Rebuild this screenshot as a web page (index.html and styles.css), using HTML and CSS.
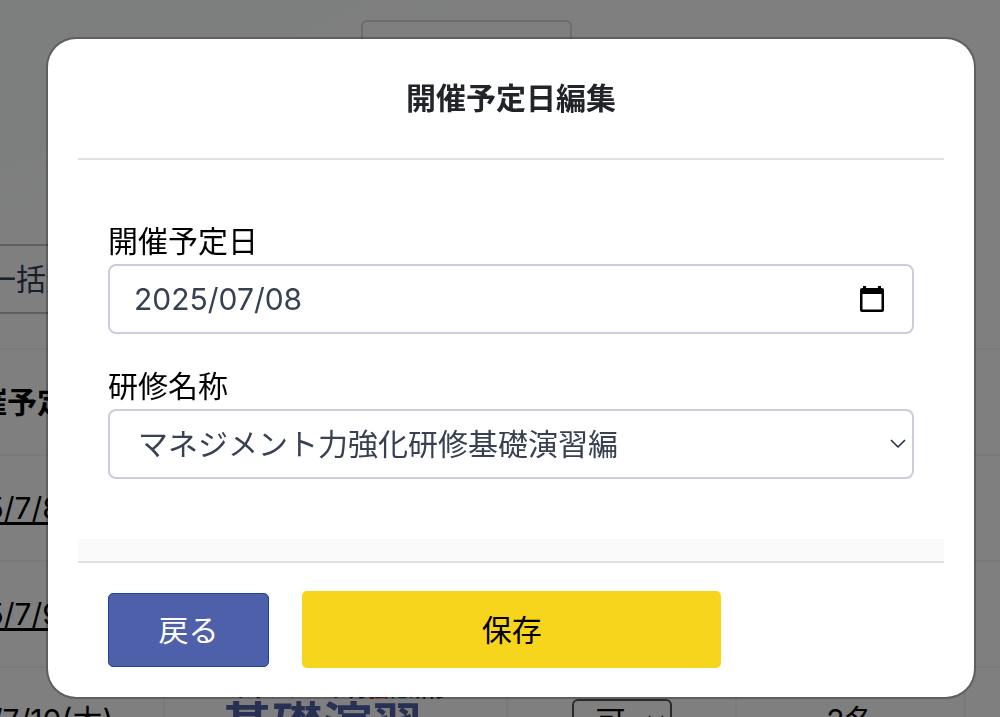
FILE: index.html
```html
<!DOCTYPE html>
<html lang="ja">
<head>
<meta charset="utf-8">
<meta name="viewport" content="width=device-width, initial-scale=1">
<title>開催予定日編集</title>
<link rel="stylesheet" href="styles.css">
</head>
<body>
<main class="page" inert>
  <input class="page-filter" type="text" aria-label="絞り込み">
  <button class="page-bulk" type="button">一括変更</button>
  <table class="schedule">
    <colgroup><col class="col-date"><col class="col-course"><col class="col-status"><col class="col-count"><col></colgroup>
    <thead>
      <tr><th>開催予定日</th><th></th><th></th><th></th><th></th></tr>
    </thead>
    <tbody>
      <tr><td><a href="#d8">2025/7/8</a></td><td></td><td></td><td></td><td></td></tr>
      <tr><td><a href="#d9">2025/7/9</a></td><td></td><td></td><td></td><td></td></tr>
      <tr>
        <td class="date-long">2025/7/10(木)</td>
        <td class="course"><div class="course-top">マネジメント力<span class="red">強</span><span class="green">化</span>研修</div><div class="course-name">基礎演習</div></td>
        <td class="center">
          <span class="status">
            <select class="status-select" aria-label="可否"><option>可</option></select>
            <svg class="status-arrow" viewBox="0 0 16 10" aria-hidden="true"><path d="M1 1l7 7 7-7"/></svg>
          </span>
        </td>
        <td class="center">2名</td>
        <td></td>
      </tr>
    </tbody>
  </table>
</main>

<div class="overlay">
  <form class="modal" role="dialog" aria-modal="true" aria-labelledby="modal-title">
    <header class="modal-header"><h1 class="modal-title" id="modal-title">開催予定日編集</h1></header>
    <div class="modal-body">
      <div class="field">
        <label class="label" for="date">開催予定日</label>
        <div class="control">
          <input class="input" id="date" type="text" value="2025/07/08">
          <button class="picker" type="button" aria-label="カレンダーを開く">
            <svg class="picker-icon" viewBox="0 0 24 26" aria-hidden="true"><path fill-rule="evenodd" d="M3 0h3v2h12V0h3v2h1q2 0 2 2v20q0 2-2 2H2q-2 0-2-2V4q0-2 2-2h1zM2.500 8v15.500h19V8z"/></svg>
          </button>
        </div>
      </div>
      <div class="field">
        <label class="label" for="course">研修名称</label>
        <div class="control">
          <select class="input select" id="course"><option>マネジメント力強化研修基礎演習編</option></select>
          <svg class="select-arrow" viewBox="0 0 16 10" aria-hidden="true"><path d="M1 1l7 7 7-7"/></svg>
        </div>
      </div>
    </div>
    <div class="strip"></div>
    <footer class="modal-footer">
      <button class="button back" type="button">戻る</button>
      <button class="button save" type="submit">保存</button>
    </footer>
  </form>
</div>
</body>
</html>
```
FILE: styles.css
```css
* { box-sizing: border-box; }

body {
  margin: 0;
  height: 100vh;
  overflow: hidden;
  font-family: Inter, "Noto Sans CJK JP", sans-serif;
  font-size: 30px;
  line-height: 44px;
  color: #000;
}

input, select, button {
  margin: 0;
  font: inherit;
  color: inherit;
}

/* Page behind the dialog */
.page {
  display: flex;
  flex-direction: column;
  align-items: flex-start;
  height: 100vh;
  overflow: hidden;
  padding-top: 20px;
  background:
    linear-gradient(155deg, #fbfffd 0, #fbfffd 14%, transparent 20%),
    #fefefe;
}

.page > * { flex-shrink: 0; }

.page-filter {
  width: 211px;
  height: 70px;
  margin-left: 361px;
  border: 2px solid #d5dae3;
  border-radius: 6px;
  background: #fff;
}

.page-bulk {
  height: 70px;
  margin: 154px 0 34px -40px;
  padding: 0 24px;
  border: 2px solid #b8c0cc;
  background: transparent;
  color: #334155;
}

.schedule {
  width: calc(100% + 217px);
  margin-left: -118px;
  table-layout: fixed;
  border-collapse: collapse;
  background: #fff;
}

.schedule th, .schedule td {
  height: 106px;
  padding: 0 0 0 46px;
  border: 2px solid #f3f4f6;
  text-align: left;
  white-space: nowrap;
}

.schedule th { padding-left: 64px; border-left: 0; border-right: 0; background: #fefefe; }
.schedule a { color: inherit; text-underline-offset: 3px; }
.schedule .date-long { padding-left: 34px; }
.schedule .center { padding: 0; text-align: center; }
.schedule .course { padding: 12px 0 0 57px; vertical-align: top; font-weight: 700; }
.col-date { width: 281px; }
.col-course { width: 343px; }
.col-status { width: 229px; }
.col-count { width: 229px; }
.course-top { padding-left: 6px; font-size: 20px; line-height: 20px; color: #20284d; }
.course-name { font-size: 50px; line-height: 52px; color: #5060a8; }
.red { color: #e5342a; }
.green { color: #168a3b; }

.status { display: inline-grid; align-items: center; vertical-align: middle; }
.status > * { grid-area: 1 / 1; }
.status-select {
  appearance: none;
  width: 100px;
  height: 44px;
  padding: 0 22px;
  border: 2px solid #555;
  border-radius: 6px;
  background: transparent;
  line-height: 40px;
}
.status-arrow, .select-arrow {
  justify-self: end;
  width: 16px;
  height: 10px;
  fill: none;
  stroke: #1e293b;
  stroke-width: 1.5;
  pointer-events: none;
}
.status-arrow { margin-right: 8px; margin-bottom: 2px; }

/* Dialog */
.overlay {
  position: fixed;
  inset: 0;
  padding: 37px 24px 0 46px;
  background: rgba(0, 0, 0, 0.5);
}

.modal {
  padding: 0 30px;
  border: 2px solid rgba(0, 0, 0, 0.25);
  border-radius: 30px;
  background: #fff;
  background-clip: padding-box;
}

.modal-header {
  padding: 37px 0 38px;
  border-bottom: 2px solid #dee2e6;
  text-align: center;
}

.modal-title {
  margin: 0;
  font-size: 30px;
  line-height: 44px;
  font-weight: 700;
  color: #212529;
}

.modal-body {
  display: grid;
  gap: 31px;
  padding: 60px 30px;
}

.label { display: block; line-height: 42px; padding-bottom: 2px; }

.control { display: grid; align-items: center; }
.control > * { grid-area: 1 / 1; }

.input {
  width: 100%;
  height: 70px;
  padding: 0 24px;
  border: 2px solid #c9ced9;
  border-radius: 8px;
  background: #fff;
  color: #374151;
}

.select { appearance: none; padding: 0 28px; }
.select-arrow { margin-right: 8px; }

.picker {
  justify-self: end;
  display: flex;
  margin-right: 30px;
  padding: 0;
  border: 0;
  background: none;
}
.picker-icon { width: 24px; height: 26px; }

.strip {
  height: 24px;
  border-bottom: 2px solid #dee2e6;
  background: #fafafa;
}

.modal-footer {
  display: flex;
  align-items: center;
  gap: 33px;
  padding: 28px 30px 29px;
}

.button { border-radius: 5px; text-align: center; }
.back {
  width: 20%;
  height: 74px;
  border: 1px solid #1c43a0;
  background: #4f60aa;
  color: #fff;
}
.save {
  width: 52%;
  height: 77px;
  border: 0;
  background: #f7d51d;
}
```
